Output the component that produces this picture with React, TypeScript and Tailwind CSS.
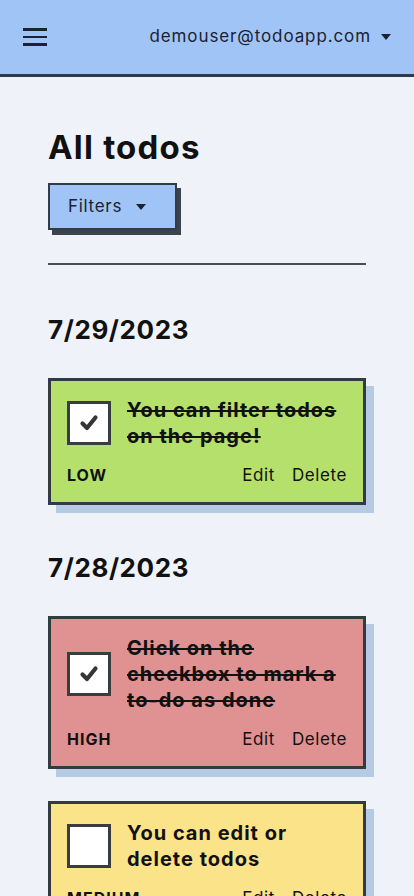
import React from 'react'

const font = { fontFamily: 'Inter, "Noto Sans", sans-serif' }

type Todo = { title: string; priority: string; done: boolean; bg: string }

const groups: { date: string; todos: Todo[] }[] = [
  {
    date: '7/29/2023',
    todos: [{ title: 'You can filter todos on the page!', priority: 'LOW', done: true, bg: 'bg-[#b6e06c]' }],
  },
  {
    date: '7/28/2023',
    todos: [
      { title: 'Click on the checkbox to mark a to-do as done', priority: 'HIGH', done: true, bg: 'bg-[#e09191]' },
      { title: 'You can edit or delete todos', priority: 'MEDIUM', done: false, bg: 'bg-[#fbe389]' },
    ],
  },
]

function Caret() {
  return (
    <svg width="10" height="6" viewBox="0 0 10 6" className="fill-[#1a2233]">
      <path d="M0 0h10L5 6z" />
    </svg>
  )
}

function TodoCard({ todo }: { todo: Todo }) {
  return (
    <div className={`${todo.bg} border-[3px] border-[#333a40] shadow-[8px_8px_0_#b7cae3] px-[16px] pt-[16px] pb-[17px]`}>
      <div className="flex items-center gap-[16px]">
        <div className="w-[44px] h-[44px] shrink-0 bg-white border-[3px] border-[#3a3d40] flex items-center justify-center">
          {todo.done && (
            <svg width="20" height="18" viewBox="0 0 20 18">
              <path d="M3.5 9.5l4.5 4.5L16.5 3.5" fill="none" stroke="#363636" strokeWidth="4.2" strokeLinecap="round" strokeLinejoin="round" />
            </svg>
          )}
        </div>
        <p className={`text-[20px] leading-[26px] font-bold text-[#111] tracking-[1px] ${todo.done ? 'line-through decoration-[2px]' : ''}`}>
          {todo.title}
        </p>
      </div>
      <div className="flex items-center justify-between mt-[16px] leading-[20px]">
        <span className="text-[16px] font-bold text-[#111] tracking-[1px]">{todo.priority}</span>
        <div className="flex gap-[17px] text-[17px] text-[#111] tracking-[0.6px]">
          <span>Edit</span>
          <span>Delete</span>
        </div>
      </div>
    </div>
  )
}

export default function App() {
  return (
    <div className="min-h-[896px] bg-[#eff3f9]" style={font}>
      <header className="h-[77px] bg-[#a1c4f7] border-b-[3px] border-[#2f3a4c] flex items-center justify-between px-[23px]">
        <div className="flex flex-col gap-[5px] w-[24px]">
          <span className="h-[2.5px] bg-[#1a2233]" />
          <span className="h-[2.5px] bg-[#1a2233]" />
          <span className="h-[2.5px] bg-[#1a2233]" />
        </div>
        <div className="flex items-center gap-[10px] text-[17px] text-[#1a2233] tracking-[0.9px]">
          <span>demouser@todoapp.com</span>
          <Caret />
        </div>
      </header>

      <main className="px-[48px] pt-[50px]">
        <h1 className="text-[33px] font-bold text-[#111] leading-[40px] tracking-[1.2px]">All todos</h1>
        <button className="mt-[16px] w-[129px] h-[47px] bg-[#a1c4f7] border-[2px] border-[#343b44] shadow-[4px_5px_0_#3b434d] flex items-center gap-[14px] pl-[18px] text-[17px] text-[#1a2233] tracking-[0.7px]">
          <span>Filters</span>
          <Caret />
        </button>
        <hr className="mt-[33px] border-0 h-[2px] bg-[#4a4f55]" />

        <div className="pt-[48px] flex flex-col gap-[46px]">
          {groups.map((g) => (
            <section key={g.date}>
              <h2 className="text-[26px] font-bold text-[#111] leading-[34px] tracking-[0.6px]">{g.date}</h2>
              <div className="mt-[31px] flex flex-col gap-[32px]">
                {g.todos.map((t) => (
                  <TodoCard key={t.title} todo={t} />
                ))}
              </div>
            </section>
          ))}
        </div>
      </main>
    </div>
  )
}
